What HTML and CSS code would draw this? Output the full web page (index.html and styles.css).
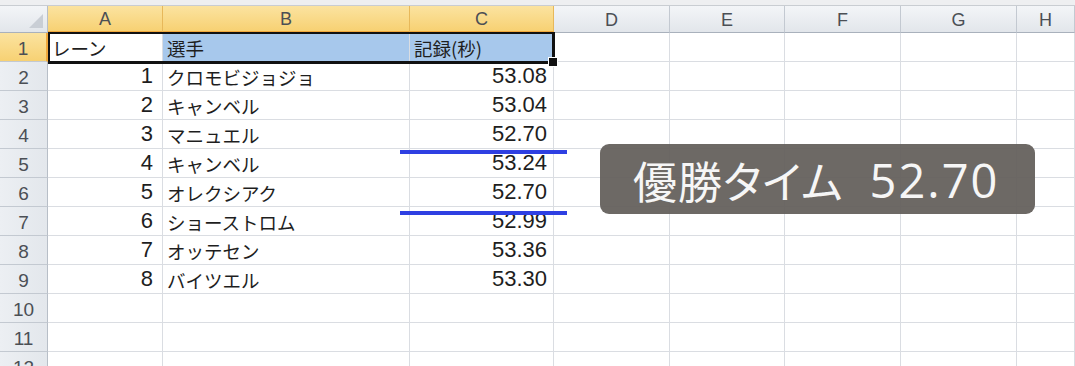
FILE: index.html
```html
<!DOCTYPE html>
<html lang="ja">

<head>
  <meta charset="UTF-8">
  <title>競泳 決勝 記録</title>
  <link rel="stylesheet" href="styles.css">
</head>

<body>
  <div class="window">
    <div class="toolbar-edge"></div>

    <div class="sheet">
      <!-- column headers -->
      <div class="corner"></div>
      <div class="col-head is-active">A</div>
      <div class="col-head is-active">B</div>
      <div class="col-head is-active">C</div>
      <div class="col-head">D</div>
      <div class="col-head">E</div>
      <div class="col-head">F</div>
      <div class="col-head">G</div>
      <div class="col-head">H</div>

      <!-- row 1 -->
      <div class="row-head is-active">1</div>
      <div class="cell txt">レーン</div>
      <div class="cell txt picked">選手</div>
      <div class="cell txt picked">記録(秒)</div>
      <div class="cell"></div><div class="cell"></div><div class="cell"></div><div class="cell"></div><div class="cell"></div>

      <!-- row 2 -->
      <div class="row-head">2</div>
      <div class="cell num lane">1</div>
      <div class="cell txt">クロモビジョジョ</div>
      <div class="cell num">53.08</div>
      <div class="cell"></div><div class="cell"></div><div class="cell"></div><div class="cell"></div><div class="cell"></div>

      <!-- row 3 -->
      <div class="row-head">3</div>
      <div class="cell num lane">2</div>
      <div class="cell txt">キャンベル</div>
      <div class="cell num">53.04</div>
      <div class="cell"></div><div class="cell"></div><div class="cell"></div><div class="cell"></div><div class="cell"></div>

      <!-- row 4 -->
      <div class="row-head">4</div>
      <div class="cell num lane">3</div>
      <div class="cell txt">マニュエル</div>
      <div class="cell num">52.70</div>
      <div class="cell"></div><div class="cell"></div><div class="cell"></div><div class="cell"></div><div class="cell"></div>

      <!-- row 5 -->
      <div class="row-head">5</div>
      <div class="cell num lane">4</div>
      <div class="cell txt">キャンベル</div>
      <div class="cell num">53.24</div>
      <div class="cell"></div><div class="cell"></div><div class="cell"></div><div class="cell"></div><div class="cell"></div>

      <!-- row 6 -->
      <div class="row-head">6</div>
      <div class="cell num lane">5</div>
      <div class="cell txt">オレクシアク</div>
      <div class="cell num">52.70</div>
      <div class="cell"></div><div class="cell"></div><div class="cell"></div><div class="cell"></div><div class="cell"></div>

      <!-- row 7 -->
      <div class="row-head">7</div>
      <div class="cell num lane">6</div>
      <div class="cell txt">ショーストロム</div>
      <div class="cell num">52.99</div>
      <div class="cell"></div><div class="cell"></div><div class="cell"></div><div class="cell"></div><div class="cell"></div>

      <!-- row 8 -->
      <div class="row-head">8</div>
      <div class="cell num lane">7</div>
      <div class="cell txt">オッテセン</div>
      <div class="cell num">53.36</div>
      <div class="cell"></div><div class="cell"></div><div class="cell"></div><div class="cell"></div><div class="cell"></div>

      <!-- row 9 -->
      <div class="row-head">9</div>
      <div class="cell num lane">8</div>
      <div class="cell txt">バイツエル</div>
      <div class="cell num">53.30</div>
      <div class="cell"></div><div class="cell"></div><div class="cell"></div><div class="cell"></div><div class="cell"></div>

      <!-- empty rows -->
      <div class="row-head">10</div>
      <div class="cell"></div><div class="cell"></div><div class="cell"></div><div class="cell"></div><div class="cell"></div><div class="cell"></div><div class="cell"></div><div class="cell"></div>
      <div class="row-head">11</div>
      <div class="cell"></div><div class="cell"></div><div class="cell"></div><div class="cell"></div><div class="cell"></div><div class="cell"></div><div class="cell"></div><div class="cell"></div>
      <div class="row-head">12</div>
      <div class="cell"></div><div class="cell"></div><div class="cell"></div><div class="cell"></div><div class="cell"></div><div class="cell"></div><div class="cell"></div><div class="cell"></div>

      <!-- selected range A1:C1 -->
      <div class="selection"></div>
    </div>

    <!-- marker lines around the tied rows -->
    <div class="marker marker-top"></div>
    <div class="marker marker-bottom"></div>

    <div class="caption">
      <span class="caption-label">優勝タイム</span>
      <span class="caption-value">52.70</span>
    </div>
  </div>
</body>

</html>
```

FILE: styles.css
```css
:root {
  --grid-line: #dadde2;
  --head-bg: linear-gradient(#f3f5f8, #e2e6eb);
  --head-line: #c3c9d1;
  --head-text: #4b4f55;
  --active-bg: linear-gradient(#fbe3a0, #f7d173);
  --active-line: #f0a83c;
  --pick-bg: #a7c8ec;
  --cell-text: #1e1e1e;
}

* {
  box-sizing: border-box;
  margin: 0;
  padding: 0;
}

body {
  background: #fff;
  width: 1075px;
  height: 366px;
  overflow: hidden;
}

.window {
  position: relative;
  height: 366px;
  overflow: hidden;
}

.toolbar-edge {
  height: 6px;
  background: #eeeff1;
  border-bottom: 1px solid #c9cdd2;
}

.sheet {
  position: relative;
  display: grid;
  grid-template-columns: 48px 115px 247px 144px 116px 115px 116px 116px 1fr;
  grid-template-rows: 27px repeat(12, 29px);
  font-family: "Liberation Sans", "Noto Sans CJK JP", sans-serif;
  color: var(--cell-text);
}

/* headers */
.corner,
.col-head,
.row-head {
  background: var(--head-bg);
  color: var(--head-text);
  display: flex;
  align-items: center;
  justify-content: center;
  font-size: 18px;
}

.corner {
  position: relative;
  border-right: 1px solid #b7bec7;
  border-bottom: 1px solid #a9b1bc;
}

.corner::after {
  content: "";
  position: absolute;
  right: 4px;
  bottom: 4px;
  width: 0;
  height: 0;
  border-left: 14px solid transparent;
  border-bottom: 14px solid #c9ced5;
}

.col-head {
  border-right: 1px solid var(--head-line);
  border-bottom: 1px solid #a9b1bc;
  padding-top: 2px;
}

.row-head {
  background: linear-gradient(90deg, #eceff3, #e3e7ec);
  border-right: 1px solid #b7bec7;
  border-bottom: 1px solid var(--head-line);
  font-size: 19px;
  padding-top: 3px;
}

.col-head.is-active {
  background: var(--active-bg);
  border-bottom: 2px solid var(--active-line);
  border-right-color: #e7b85a;
}

.row-head.is-active {
  background: var(--active-bg);
  border-right: 2px solid var(--active-line);
}

/* cells */
.cell {
  border-right: 1px solid var(--grid-line);
  border-bottom: 1px solid var(--grid-line);
  display: flex;
  align-items: flex-end;
  padding: 0 5px 3px;
  line-height: 1;
  white-space: nowrap;
}

.txt {
  font-family: "Noto Sans CJK JP", sans-serif;
  font-size: 18.5px;
  padding-left: 4px;
  padding-bottom: 4px;
}

.num {
  justify-content: flex-end;
  font-size: 22px;
  padding-right: 6px;
}

.num.lane {
  padding-right: 9px;
}

.picked {
  background: var(--pick-bg);
}

/* sits on top of the grid, over A1:C1 */
.selection {
  position: absolute;
  grid-column: 2 / 5;
  grid-row: 2 / 3;
  top: -1px;
  left: 0;
  right: -1px;
  bottom: -2px;
  border: 2px solid #111;
  border-bottom-width: 3px;
  border-right-width: 3px;
  pointer-events: none;
}

.selection::after {
  content: "";
  position: absolute;
  right: -6px;
  bottom: -6px;
  width: 8px;
  height: 8px;
  background: #111;
  border: 1px solid #fff;
}

/* overlay marks */
.marker {
  position: absolute;
  left: 400px;
  width: 167px;
  height: 4px;
  background: #2e3fe2;
}

.marker-top {
  top: 150px;
}

.marker-bottom {
  top: 211px;
}

.caption {
  position: absolute;
  left: 600px;
  top: 144px;
  width: 435px;
  height: 70px;
  border-radius: 9px;
  background: rgba(100, 96, 91, 0.94);
  color: #f6f6f6;
  display: flex;
  align-items: center;
  padding: 2px 0 0 33px;
  white-space: nowrap;
}

.caption-label {
  font-family: "Noto Sans CJK JP", sans-serif;
  font-size: 44px;
  font-feature-settings: "palt";
  letter-spacing: 1px;
}

.caption-value {
  font-family: "Open Sans", sans-serif;
  font-size: 47px;
  letter-spacing: 2px;
  margin-left: 26px;
}
```
